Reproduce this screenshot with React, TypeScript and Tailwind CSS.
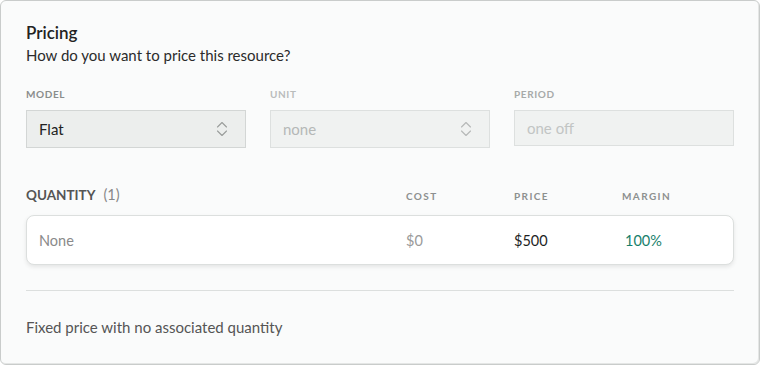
import React from "react";

function UpDown({ color }: { color: string }) {
  return (
    <svg width="12" height="16" viewBox="0 0 12 16" fill="none" stroke={color} strokeWidth="1.1" strokeLinecap="round" strokeLinejoin="round">
      <path d="M1.5 6 L6 1.5 L10.5 6" />
      <path d="M1.5 10 L6 14.5 L10.5 10" />
    </svg>
  );
}

export default function App() {
  const font = { fontFamily: "Lato, 'Noto Sans', sans-serif" };
  return (
    <div style={font} className="w-[760px] h-[365px] bg-white">
      <div className="w-[760px] h-[365px] bg-[#fafbfb] border border-[#c9cccb] rounded-md shadow-[inset_-1px_-1px_0_#e4e6e5] px-[25px] pt-[22px]">
        <div className="text-[17px] font-semibold text-[#222] leading-[20px]">Pricing</div>
        <div className="text-[15px] text-[#2b2b2b] leading-[20px] mt-[2px]">How do you want to price this resource?</div>

        <div className="grid grid-cols-3 gap-x-[24px] mt-[22px]">
          <div>
            <div className="text-[10px] font-bold tracking-[0.06em] text-[#8a8d8c] leading-[14px]">MODEL</div>
            <div className="mt-[9px] h-[38px] bg-[#eceeed] border border-[#d3d6d5] flex items-center justify-between pl-[12px] pr-[17px]">
              <span className="text-[15px] text-[#222]">Flat</span>
              <UpDown color="#9a9d9c" />
            </div>
          </div>
          <div>
            <div className="text-[10px] font-bold tracking-[0.06em] text-[#b9bcbb] leading-[14px]">UNIT</div>
            <div className="mt-[9px] h-[38px] bg-[#f0f2f1] border border-[#dde0df] flex items-center justify-between pl-[12px] pr-[17px]">
              <span className="text-[15px] text-[#b5b8b7]">none</span>
              <UpDown color="#b5b8b7" />
            </div>
          </div>
          <div>
            <div className="text-[10px] font-bold tracking-[0.06em] text-[#a7aaa9] leading-[14px]">PERIOD</div>
            <div className="mt-[9px] h-[36px] bg-[#f0f2f1] border border-[#dde0df] flex items-center pl-[12px]">
              <span className="text-[15px] text-[#c2c5c4]">one off</span>
            </div>
          </div>
        </div>

        <div className="flex items-end mt-[38px] h-[18px]">
          <div className="w-[380px] text-[13.5px] leading-[18px]">
            <span className="font-bold text-[#555]">QUANTITY</span>
            <span className="text-[14.5px] text-[#888] ml-[8px]">(1)</span>
          </div>
          <div className="w-[108px] text-[10px] font-bold tracking-[0.14em] text-[#8d908f] leading-[16px]">COST</div>
          <div className="w-[108px] text-[10px] font-bold tracking-[0.14em] text-[#8d908f] leading-[16px]">PRICE</div>
          <div className="text-[10px] font-bold tracking-[0.14em] text-[#8d908f] leading-[16px]">MARGIN</div>
        </div>

        <div className="mt-[11px] h-[50px] bg-white border border-[#dcdfde] rounded-[8px] shadow-[0_2px_4px_rgba(0,0,0,0.09)] flex items-center pl-[12px] text-[14.5px] pt-[1px]">
          <div className="w-[367px] text-[#8a8a8a]">None</div>
          <div className="w-[108px] text-[#9a9a9a]">$0</div>
          <div className="w-[111px] text-[#1f1f1f]">$500</div>
          <div className="text-[#187f6c]">100%</div>
        </div>

        <div className="mt-[25px] border-t border-[#dcdfde]" />

        <div className="mt-[26px] text-[15px] text-[#555] leading-[20px]">Fixed price with no associated quantity</div>
      </div>
    </div>
  );
}
